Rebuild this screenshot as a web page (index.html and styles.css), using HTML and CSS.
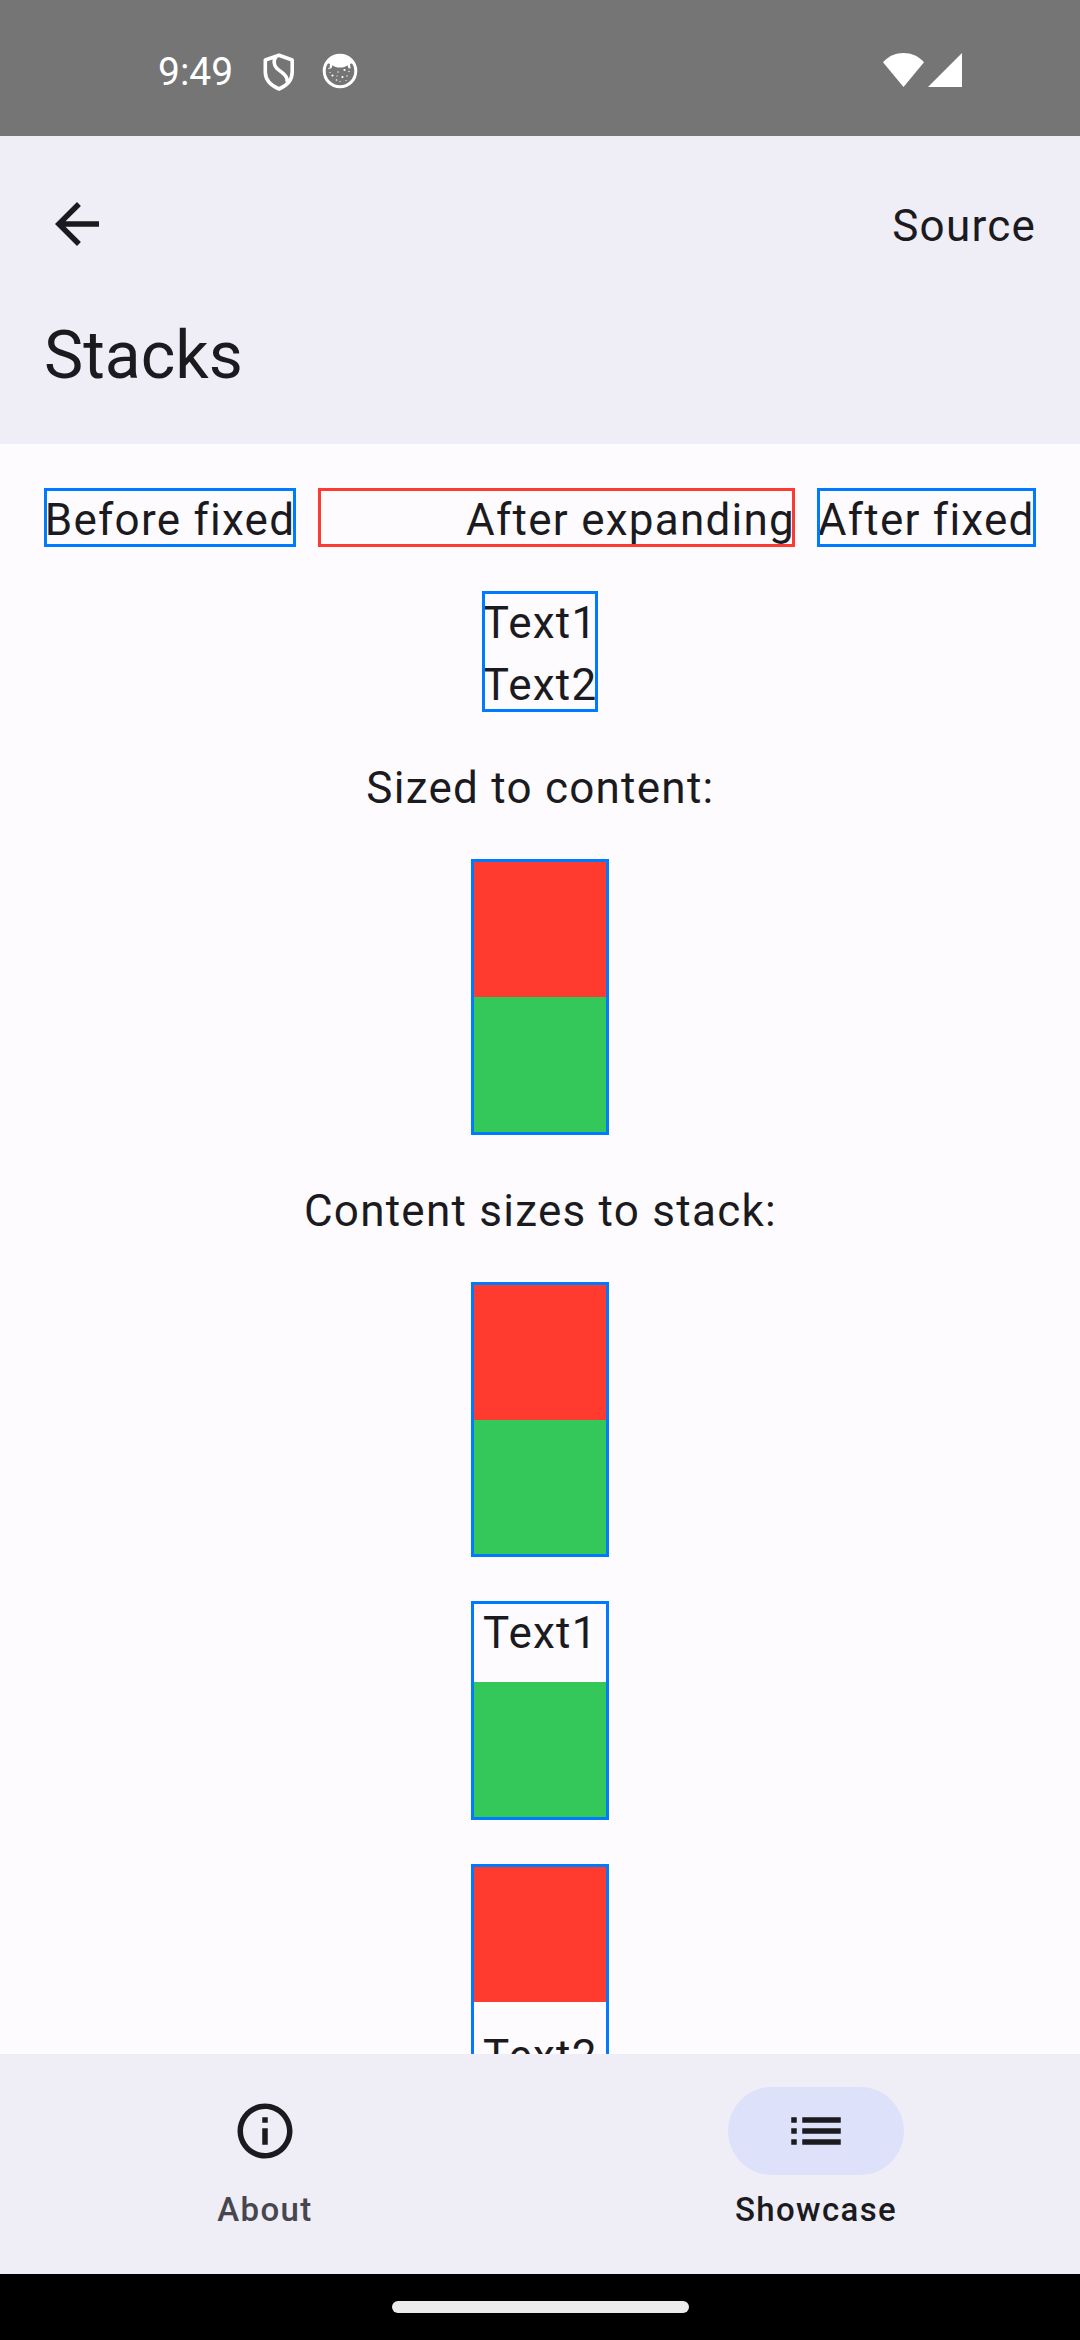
FILE: index.html
```
<!DOCTYPE html>
<html lang="en">
<head>
<meta charset="utf-8">
<title>Stacks</title>
<link rel="stylesheet" href="styles.css">
</head>
<body>
<div class="screen">
  <div class="status-bar">
    <div class="status-left">
      <span class="clock">9:49</span>
      <svg class="shield" viewBox="0 0 32 38" fill="none" stroke="#fff" stroke-width="3.6" stroke-linejoin="round">
        <path d="M16 2.2 29.2 7v12c0 7.500-5 13.500-13.200 17C7.800 32.500 2.300 26.500 2.300 19V7z"/>
        <path d="M13 4c-3 3-2 8.500.5 11 3.500 3.500 8 5.500 10 9.500.8 1.800.8 3.200.2 4.500"/>
      </svg>
      <svg class="face" viewBox="0 0 36 36">
        <circle cx="18" cy="18" r="15.800" fill="none" stroke="#fff" stroke-width="3"/>
        <path d="M6 8C9 4 13 2 18 2s9 2 12 6l1 2-3 1 .5 4.500-2-.3-1-3c-2 1.500-4 2.300-7.500 2.300s-5.500-.8-7.500-2.300l-1 3-2 .3L8 11l-3-1z" fill="#fff"/>
        <g fill="#fff">
          <circle cx="22.500" cy="17" r="1.100"/><circle cx="10.500" cy="22.500" r="1.100"/>
          <circle cx="20.500" cy="24" r="1.100"/><circle cx="16" cy="19" r=".7"/>
          <circle cx="27" cy="18.500" r=".7"/><circle cx="14.500" cy="27" r=".8"/>
          <circle cx="25" cy="23" r=".7"/><circle cx="8" cy="19.500" r=".6"/>
          <circle cx="18" cy="28.500" r=".6"/><circle cx="24" cy="27.500" r=".6"/>
          <circle cx="15" cy="23" r=".6"/><circle cx="7" cy="15.500" r=".7"/>
        </g>
      </svg>
    </div>
    <div class="status-right">
      <svg class="wifi" viewBox="0 0 41 34"><path d="M0 9.300C11-3 30-3 41 9.300L20.500 34z" fill="#fff"/></svg>
      <svg class="signal" viewBox="0 0 34 34"><path d="M34 0v34H0z" fill="#fff"/></svg>
    </div>
  </div>

  <header class="app-bar">
    <div class="toolbar">
      <svg class="icon" viewBox="0 0 24 24"><path d="M20 11H7.830l5.590-5.590L12 4l-8 8 8 8 1.410-1.410L7.830 13H20z"/></svg>
      <span class="text">Source</span>
    </div>
    <h1 class="title">Stacks</h1>
  </header>

  <main class="content">
    <div class="row">
      <div class="text outlined before">Before fixed</div>
      <div class="text outlined expanding">After expanding</div>
      <div class="text outlined after">After fixed</div>
    </div>
    <div class="outlined text-stack">
      <div class="text">Text1</div>
      <div class="text">Text2</div>
    </div>
    <div class="text">Sized to content:</div>
    <div class="outlined stack">
      <div class="block red"></div>
      <div class="block green"></div>
    </div>
    <div class="text">Content sizes to stack:</div>
    <div class="outlined stack">
      <div class="block red"></div>
      <div class="block green shorter"></div>
    </div>
    <div class="outlined stack spaced">
      <div class="text">Text1</div>
      <div class="block green"></div>
    </div>
    <div class="outlined stack spaced">
      <div class="block red"></div>
      <div class="text">Text2</div>
    </div>
  </main>

  <nav class="nav-bar">
    <div class="nav-item">
      <div class="pill"><svg class="icon" viewBox="0 0 24 24"><path d="M11 7h2v2h-2zm0 4h2v6h-2zm1-9C6.480 2 2 6.480 2 12s4.480 10 10 10 10-4.480 10-10S17.520 2 12 2zm0 18c-4.410 0-8-3.590-8-8s3.590-8 8-8 8 3.590 8 8-3.590 8-8 8z"/></svg></div>
      <span class="label">About</span>
    </div>
    <div class="nav-item selected">
      <div class="pill"><svg class="icon" viewBox="0 0 24 24"><path d="M3 13h2v-2H3zm0 4h2v-2H3zm0-8h2V7H3zm4 4h14v-2H7zm0 4h14v-2H7zM7 7v2h14V7z"/></svg></div>
      <span class="label">Showcase</span>
    </div>
  </nav>
  <div class="gesture-bar"><div class="handle"></div></div>
</div>
</body>
</html>
```
FILE: styles.css
```
* { box-sizing: border-box; }

body {
  margin: 0;
  font-family: Roboto, sans-serif;
  color: #1b1b1f;
}

svg { display: block; flex: none; }

.screen {
  width: 1080px;
  height: 2340px;
  display: flex;
  flex-direction: column;
  overflow: hidden;
  background: #fefbff;
}

.status-bar {
  height: 136px;
  flex: none;
  display: flex;
  justify-content: space-between;
  padding: 53px 118px 0 158px;
  background: #757575;
  color: #fff;
}

.status-left, .status-right { display: flex; align-items: flex-start; }
.clock { width: 105px; font-size: 39px; line-height: 39px; }
.shield { width: 32px; height: 38px; }
.face { width: 36px; height: 36px; margin-left: 27px; }
.wifi { width: 41px; height: 34px; }
.signal { width: 34px; height: 34px; margin-left: 4px; }

.app-bar {
  height: 308px;
  flex: none;
  padding: 55px 44px 0;
  background: #efedf6;
}

.toolbar { display: flex; justify-content: space-between; height: 66px; }
.toolbar .text { margin-top: 3px; }
.icon { width: 66px; height: 66px; fill: #1b1b1f; }

.title {
  margin: 59px 0 0;
  font-size: 66px;
  font-weight: 400;
  line-height: 80px;
}

.text {
  height: 59px;
  flex: none;
  padding-top: 5px;
  font-size: 44px;
  line-height: 54px;
  letter-spacing: 1.25px;
  text-indent: 0.8px;
  white-space: nowrap;
}

.content {
  flex: 1;
  min-height: 0;
  overflow: hidden;
  display: flex;
  flex-direction: column;
  align-items: center;
  gap: 44px;
  padding: 44px 44px 0;
}

.outlined { outline: 3px solid #007aff; outline-offset: -3px; flex: none; }

.row { display: flex; gap: 22px; align-self: stretch; }
.before { width: 252px; }
.after { width: 219px; }
.expanding { flex: 1; text-align: right; outline-color: #ff3b30; }

.text-stack { width: 116px; display: flex; flex-direction: column; gap: 3px; }

.stack {
  width: 138px;
  display: flex;
  flex-direction: column;
}

.stack .text { text-align: center; }
.spaced { gap: 22px; }
.block { height: 138px; }
.shorter { height: 137px; }
.red { background: #ff3b30; }
.green { background: #34c759; }

.nav-bar {
  height: 220px;
  flex: none;
  display: flex;
  gap: 22px;
  padding-top: 33px;
  background: #efedf6;
}

.nav-item {
  flex: 1;
  display: flex;
  flex-direction: column;
  align-items: center;
  gap: 13px;
}

.pill {
  width: 176px;
  height: 88px;
  display: flex;
  align-items: center;
  justify-content: center;
  border-radius: 44px;
}

.label {
  font-size: 33px;
  font-weight: 500;
  line-height: 44px;
  letter-spacing: 1.375px;
  text-indent: 1px;
  color: #46464f;
}

.selected .pill { background: #dde1f9; }
.selected .label { color: #1b1b1f; }

.gesture-bar {
  height: 66px;
  flex: none;
  display: flex;
  justify-content: center;
  align-items: flex-start;
  padding-top: 27px;
  background: #000;
}

.handle { width: 297px; height: 12px; border-radius: 6px; background: #ececec; }
```
